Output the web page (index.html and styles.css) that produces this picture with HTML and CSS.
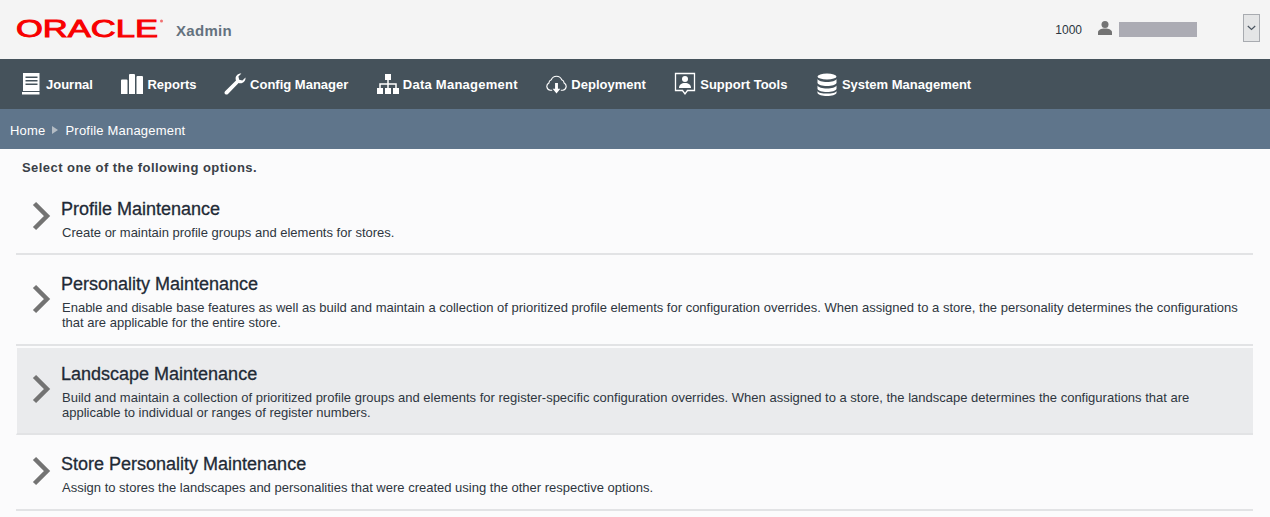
FILE: index.html
```html
<!DOCTYPE html>
<html lang="en">
<head>
<meta charset="utf-8">
<title>Xadmin</title>
<link rel="stylesheet" href="styles.css">
</head>
<body>
<header class="top">
  <div class="brand">
    <svg class="logo" width="150" height="24" viewBox="0 0 150 24"><text x="0" y="20" textLength="142" lengthAdjust="spacingAndGlyphs" class="logo-text">ORACLE</text><circle cx="145.500" cy="4" r="1.500" fill="#f07070"/></svg>
    <span class="app">Xadmin</span>
  </div>
  <div class="user">
    <span class="store">1000</span>
    <svg class="person" width="16" height="16" viewBox="0 0 16 16"><circle cx="8" cy="4.500" r="3.500" fill="#737373"/><path d="M1 15v-2.500C1 10 4 8.500 8 8.500s7 1.500 7 4V15z" fill="#737373"/></svg>
    <span class="name"></span>
    <button class="menu" aria-label="menu"><svg width="9" height="6" viewBox="0 0 9 6"><path d="M.8 1l3.700 3.500L8.200 1" fill="none" stroke="#4a5560" stroke-width="1.200"/></svg></button>
  </div>
</header>
<nav class="nav">
  <a class="item"><svg width="20" height="22" viewBox="0 0 20 22"><path d="M1 0h16.500v18H1zM3.500 3.500v1.500h12V3.500zM3.500 7v1.500h12V7zM3.500 10.500V12h12v-1.500z" fill="#fff" fill-rule="evenodd"/><path d="M0 19h17.500v2.500H0z" fill="#fff"/></svg>Journal</a>
  <a class="item"><svg width="22" height="22" viewBox="0 0 22 22"><path d="M0 7.500a1 1 0 0 1 1-1h4.500a1 1 0 0 1 1 1V21H0zM8 2a1 1 0 0 1 1-1h4a1 1 0 0 1 1 1v19H8zM15.500 4a1 1 0 0 1 1-1H21a1 1 0 0 1 1 1v17h-6.500z" fill="#fff"/></svg>Reports</a>
  <a class="item config"><svg width="22" height="22" viewBox="0 0 22 22"><path d="M21.500 4.500c.3 3-2 5.800-5 5.800-.7 0-1.300-.1-1.900-.4L4 21c-.9.8-2.100.8-2.900 0s-.8-2 0-2.800L12 7.500c-.3-.6-.4-1.300-.4-2 0-3 2.800-5.300 5.800-5l-3 3 .8 3.200 3.200.8z" fill="#fff"/></svg>Config Manager</a>
  <a class="item wide"><svg width="22" height="22" viewBox="0 0 22 22"><path d="M8 1h6v6h-6zM0 15h6v6H0zM8 15h6v6H8zM16 15h6v6h-6z" fill="#fff"/><path d="M11 7v8M3 15v-4h16v4" fill="none" stroke="#fff" stroke-width="1.500"/></svg>Data Management</a>
  <a class="item"><svg width="21" height="22" viewBox="0 0 22 22"><path d="M6.500 17.500H4.500A4 4 0 0 1 3 10 4 4 0 0 1 5.500 6.500a6 6 0 0 1 11 0A4 4 0 0 1 19 10a4 4 0 0 1-1.500 7.500h-2" fill="none" stroke="#fff" stroke-width="1.200"/><path d="M9.500 10h3v6H15l-4 5-4-5h2.500z" fill="#fff"/></svg>Deployment</a>
  <a class="item"><svg width="22" height="24" viewBox="0 0 22 24"><path d="M1.500 1.500h19v17h-7L11 22l-2.500-3.500h-7z" fill="none" stroke="#fff" stroke-width="1.300"/><circle cx="11" cy="7" r="3" fill="#fff"/><path d="M5 16c0-3.500 2.500-5 6-5s6 1.500 6 5z" fill="#fff"/></svg>Support Tools</a>
  <a class="item sys"><svg width="21" height="23" viewBox="0 0 21 23"><ellipse cx="10" cy="3.500" rx="9.500" ry="3" fill="#fff"/><path d="M.5 6c1 2 4.500 3 9.500 3s8.500-1 9.500-3v4c-1 2-4.500 3-9.500 3S1.500 12 .5 10zM.5 12.500c1 2 4.500 3 9.500 3s8.500-1 9.500-3V16c-1 2-4.500 3-9.500 3S1.500 18 .5 16zM.5 18c1 2 4.500 2.500 9.500 2.500s8.500-.5 9.500-2.500v2c-1 2-4.500 3-9.500 3s-8.500-1-9.500-3z" fill="#fff"/></svg>System Management</a>
</nav>
<div class="crumbs"><span>Home</span><i class="sep"></i><span>Profile Management</span></div>
<main class="content">
  <p class="lead">Select one of the following options.</p>
  <ul class="options">
    <li class="option first">
      <svg class="chev" width="20" height="30" viewBox="0 0 20 30"><path d="M2.500 2.500L15 15 2.500 27.500" fill="none" stroke="#737373" stroke-width="4.500"/></svg>
      <div class="text"><h2>Profile Maintenance</h2><p>Create or maintain profile groups and elements for stores.</p></div>
    </li>
    <li class="option">
      <svg class="chev" width="20" height="30" viewBox="0 0 20 30"><path d="M2.500 2.500L15 15 2.500 27.500" fill="none" stroke="#737373" stroke-width="4.500"/></svg>
      <div class="text"><h2>Personality Maintenance</h2><p>Enable and disable base features as well as build and maintain a collection of prioritized profile elements for configuration overrides. When assigned to a store, the personality determines the configurations that are applicable for the entire store.</p></div>
    </li>
    <li class="option active">
      <svg class="chev" width="20" height="30" viewBox="0 0 20 30"><path d="M2.500 2.500L15 15 2.500 27.500" fill="none" stroke="#737373" stroke-width="4.500"/></svg>
      <div class="text"><h2>Landscape Maintenance</h2><p>Build and maintain a collection of prioritized profile groups and elements for register-specific configuration overrides. When assigned to a store, the landscape determines the configurations that are applicable to individual or ranges of register numbers.</p></div>
    </li>
    <li class="option">
      <svg class="chev" width="20" height="30" viewBox="0 0 20 30"><path d="M2.500 2.500L15 15 2.500 27.500" fill="none" stroke="#737373" stroke-width="4.500"/></svg>
      <div class="text"><h2>Store Personality Maintenance</h2><p>Assign to stores the landscapes and personalities that were created using the other respective options.</p></div>
    </li>
  </ul>
</main>
</body>
</html>
```
FILE: styles.css
```css
* { box-sizing: border-box; }
html, body { margin: 0; height: 100%; }
body { font-family: "Liberation Sans", Arial, sans-serif; background: #fbfbfc; color: #1f2a36; overflow: hidden; }

.top { height: 59px; background: #f4f4f4; display: flex; justify-content: space-between; align-items: center; padding: 0 10px 0 16px; }
.brand { display: flex; align-items: center; }
.logo { display: block; margin-top: -1px; }
.logo-text { font-family: "Liberation Sans", sans-serif; font-size: 23px; fill: #f80000; stroke: #f80000; stroke-width: .9px; }
.app { font-size: 15px; font-weight: bold; color: #64727e; margin-left: 10px; margin-top: 2px; letter-spacing: .3px; }
.user { display: flex; align-items: center; }
.store { font-size: 12px; color: #2b3640; margin-right: 15px; }
.person { display: block; margin-right: 6px; margin-top: -3px; }
.name { width: 78px; height: 15px; background: #acacb4; margin-right: 46px; }
.menu { width: 17px; height: 28px; padding: 0; display: flex; align-items: center; justify-content: center; background: #e4e5e6; border: 1px solid #a8abb0; margin-top: -4px; }

.nav { height: 50px; background: #45525b; display: flex; align-items: center; padding-left: 22px; gap: 28.500px; }
.item { display: flex; align-items: center; gap: 4px; font-size: 13px; font-weight: bold; color: #fff; }
.item svg { display: block; }
.config { margin-left: -1px; }
.wide { letter-spacing: .25px; }
.sys { margin-left: 1px; }

.crumbs { height: 40px; background: #5f758b; display: flex; align-items: center; padding: 2px 0 0 10px; font-size: 13px; letter-spacing: .2px; color: #fff; }
.sep { width: 0; height: 0; border-left: 6px solid #b4bcc4; border-top: 4px solid transparent; border-bottom: 4px solid transparent; margin: 0 7px; }

.content { padding: 0 17px 0 16px; }
.lead { margin: 11px 0 0 6px; font-size: 13px; font-weight: bold; line-height: 15px; letter-spacing: .45px; color: #3a3f47; }
.options { list-style: none; margin: 0; padding: 0; }
.option { display: flex; align-items: center; border-bottom: 2px solid #e2e3e5; padding: 19px 0 14px 0; }
.option.first { padding-top: 24px; padding-bottom: 13px; }
.option.active { background: #eaebed; background-clip: padding-box; border-left: 1px solid transparent; margin-top: 2px; padding-top: 16px; padding-bottom: 13px; }
.chev { flex: none; margin: 0 9px 7px 16px; }
.active .chev { margin-left: 15px; }
.text { flex: 1; padding-right: 13px; }
h2 { margin: 0; font-size: 18px; font-weight: normal; line-height: 20px; color: #1f2a36; -webkit-text-stroke: .3px #1f2a36; }
.text p { margin: 6px 0 0 1px; font-size: 13px; line-height: 15px; color: #2e3640; }
```
